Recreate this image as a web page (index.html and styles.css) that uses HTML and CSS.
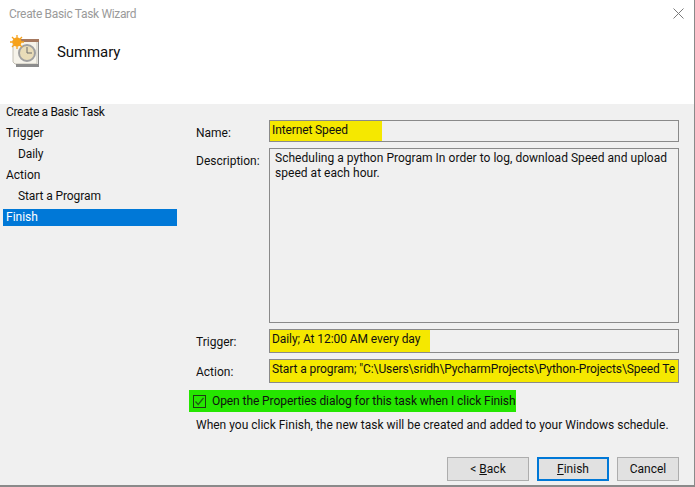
FILE: index.html
```html
<!DOCTYPE html>
<html lang="en">
<head>
  <meta charset="UTF-8">
  <title>Create Basic Task Wizard</title>
  <link rel="stylesheet" href="styles.css">
</head>
<body>
  <div class="window">
    <header class="top">
      <div class="titlebar">
        <span class="title">Create Basic Task Wizard</span>
        <svg class="close" width="11" height="11" viewBox="0 0 11 11"><path d="M0.5 0.5L10.5 10.5M10.5 0.5L0.5 10.5" stroke="#7a7a7a" fill="none"/></svg>
      </div>
      <div class="heading">
        <svg class="task-icon" width="34" height="34" viewBox="0 0 34 34">
          <path d="M8 7H32V31H10L8 29Z" fill="#f6f3ea" stroke="#c4c0b4"/>
          <rect x="10" y="6" width="26" height="3" fill="#a5785f"/>
          <rect x="33" y="9" width="3" height="25" fill="#8c8c8c"/>
          <rect x="11" y="31" width="25" height="3" fill="#8c8c8c"/>
          <circle cx="22" cy="20" r="8" fill="#e9dcb8" stroke="#a0a0a0" stroke-width="2"/>
          <path d="M22 14V20H27" stroke="#6b6b6b" fill="none"/>
          <circle cx="12" cy="9" r="4.5" fill="#f6a21c"/>
          <path d="M12 2V16M5 9H19M7 4L17 14M17 4L7 14" stroke="#f6a21c" stroke-width="1.3"/>
        </svg>
        <h1>Summary</h1>
      </div>
    </header>
    <div class="content">
      <nav class="steps">
        <div class="step first">Create a Basic Task</div>
        <div class="step">Trigger</div>
        <div class="step sub">Daily</div>
        <div class="step">Action</div>
        <div class="step sub">Start a Program</div>
        <div class="step active">Finish</div>
      </nav>
      <main class="page">
        <form class="fields">
          <label>Name:</label>
          <div class="box single"><span class="mark name-mark">Internet Speed</span></div>
          <label>Description:</label>
          <div class="box multi">Scheduling a python Program In order to log, download Speed and upload speed at each hour.</div>
          <label>Trigger:</label>
          <div class="box single"><span class="mark trigger-mark">Daily; At 12:00 AM every day</span></div>
          <label>Action:</label>
          <div class="box single"><span class="mark action-mark">Start a program; "C:\Users\sridh\PycharmProjects\Python-Projects\Speed Te</span></div>
        </form>
        <div class="check-row">
          <span class="checkbox"><svg width="11" height="11" viewBox="0 0 11 11"><path d="M1.5 5.5L4.2 8.5L9.5 2" stroke="#1e5c10" stroke-width="1.2" fill="none"/></svg></span>
          <span>Open the Properties dialog for this task when I click Finish</span>
        </div>
        <p class="note">When you click Finish, the new task will be created and added to your Windows schedule.</p>
        <div class="buttons">
          <button type="button" class="btn back">&lt; <u>B</u>ack</button>
          <button type="button" class="btn finish"><u>F</u>inish</button>
          <button type="button" class="btn cancel">Cancel</button>
        </div>
      </main>
    </div>
  </div>
</body>
</html>
```

FILE: styles.css
```css
* {
  margin: 0;
  padding: 0;
  box-sizing: border-box;
}
body {
  font-family: Roboto, Arial, sans-serif;
  font-size: 12px;
  color: #101010;
  background-color: #8a8a8a;
  width: 695px;
  height: 487px;
  overflow: hidden;
}
.window {
  width: 694px;
  height: 485px;
  background-color: #f0f0f0;
  display: flex;
  flex-direction: column;
}
.top {
  height: 104px;
  background-color: white;
}
.titlebar {
  height: 28px;
  padding: 8px 10px 0 9px;
  display: flex;
  justify-content: space-between;
  align-items: flex-start;
}
.title {
  color: #9a9a9a;
  line-height: 13px;
  letter-spacing: -0.33px;
}
.heading {
  display: flex;
  align-items: center;
  padding-left: 5px;
  margin-top: 5px;
}
h1 {
  font-size: 15px;
  font-weight: normal;
  margin: 3px 0 0 18px;
  letter-spacing: -0.1px;
}
.content {
  flex: 1;
  display: flex;
}
.steps {
  flex: none;
  width: 189px;
  padding: 0 12px 0 3px;
}
.step {
  height: 21px;
  line-height: 16px;
  padding-left: 3px;
  white-space: nowrap;
}
.step.first {
  letter-spacing: -0.33px;
}
.step.sub {
  padding-left: 15px;
  letter-spacing: -0.1px;
}
.step.active {
  height: 17px;
  line-height: 17px;
  background-color: #0078d7;
  color: white;
}
.page {
  flex: 1;
  min-width: 0;
  padding: 16px 15px 0 0;
  display: flex;
  flex-direction: column;
}
.fields {
  display: grid;
  grid-template-columns: 73px 410px;
  grid-template-rows: 22px 175px 24px 24px;
  row-gap: 6px;
  padding-left: 7px;
}
.fields label {
  padding-top: 5px;
  line-height: 16px;
}
.box {
  border: 1px solid #8a8a8a;
  background-color: #f0f0f0;
  overflow: hidden;
  white-space: nowrap;
}
.box.multi {
  white-space: normal;
  padding: 2px 4px 0 5px;
  line-height: 15px;
  letter-spacing: 0.03px;
}
.box.single {
  display: flex;
}
.mark {
  background-color: #f5e800;
  height: 100%;
  padding: 1px 0 0 2px;
  line-height: 16px;
}
.name-mark {
  width: 112px;
  letter-spacing: -0.12px;
}
.trigger-mark {
  width: 160px;
  letter-spacing: -0.07px;
}
.action-mark {
  width: 100%;
  letter-spacing: -0.1px;
}
.check-row {
  width: 327px;
  height: 22px;
  margin-top: 7px;
  background-color: #25e600;
  display: flex;
  align-items: center;
  gap: 6px;
  padding-left: 4px;
  white-space: nowrap;
  letter-spacing: -0.08px;
}
.checkbox {
  width: 13px;
  height: 13px;
  border: 1px solid #1e3a14;
  display: flex;
  align-items: center;
  justify-content: center;
}
.note {
  margin: 5px 0 0 7px;
  line-height: 16px;
  white-space: nowrap;
}
.buttons {
  display: flex;
  justify-content: flex-end;
  gap: 8px;
  margin-top: 24px;
}
.btn {
  height: 24px;
  font: inherit;
  color: inherit;
  background-color: #e1e1e1;
  border: 1px solid #adadad;
}
.back {
  width: 82px;
}
.finish {
  width: 72px;
  border: 2px solid #0078d7;
}
.cancel {
  width: 62px;
}
```
